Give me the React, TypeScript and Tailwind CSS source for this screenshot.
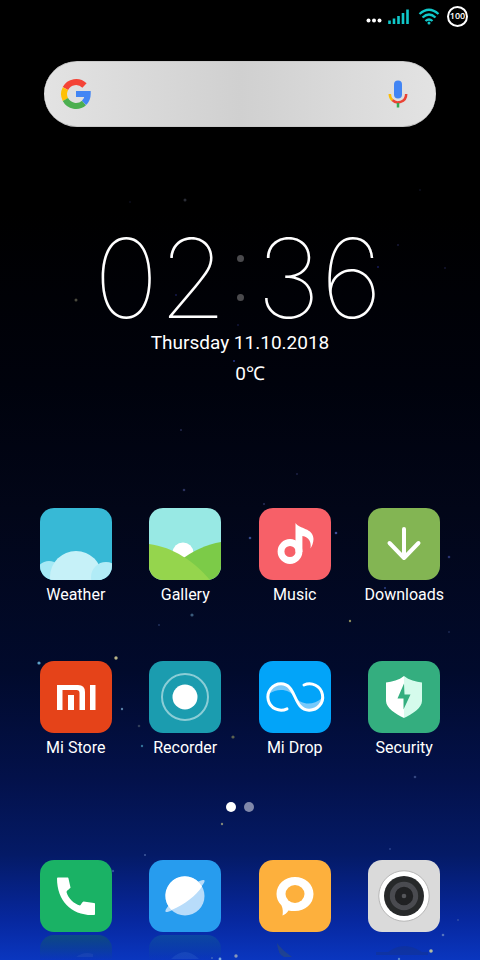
import type { ReactNode } from 'react'

type App = { name: string; icon: ReactNode; tile: string }

const stars = [
  [185, 200, 1.5, '#2a2c35'], [130, 202, 1, '#0d0e1c'], [76, 300, 1.5, '#4a4a3e'], [398, 245, 1, '#171938'],
  [445, 268, 1, '#141631'], [378, 267, 1, '#171b5a'], [176, 295, 1, '#151a4c'], [238, 325, 1, '#12163a'],
  [234, 361, 1, '#24388c'], [420, 190, 1, '#0d0f1e'], [181, 430, 1, '#23284c'], [297, 474, 1, '#1c2144'],
  [184, 490, 1.3, '#2b315c'], [264, 504, 1, '#272f5b'], [250, 538, 1.3, '#354887'], [336, 533, 1.3, '#3e4d95'],
  [449, 557, 1.3, '#29336f'], [385, 588, 1, '#2d4188'], [192, 615, 1.6, '#3a5a7a'], [159, 625, 1, '#22315c'],
  [350, 621, 1.2, '#8b8a5c'], [449, 632, 1, '#1b2752'], [39, 663, 1.6, '#5da1c8'], [116, 658, 1.7, '#b9b588'],
  [122, 709, 1.2, '#587fa6'], [139, 726, 1.3, '#303d5a'], [142, 746, 1.2, '#347198'], [233, 737, 1.6, '#5c624f'],
  [415, 777, 1.3, '#344680'], [222, 824, 1.2, '#808777'], [145, 855, 1, '#405b9c'], [113, 871, 1.2, '#304e9b'],
  [390, 849, 1, '#28418b'], [458, 920, 1, '#304da7'], [443, 935, 1.3, '#5574bd'], [431, 951, 1.8, '#b5bd9f'],
  [236, 956, 1.7, '#8797bb'], [220, 959, 1.4, '#85b1e1'], [212, 958, 1, '#4067bd'], [399, 959, 1.2, '#5784cf'],
] as const

function Weather() {
  return (
    <svg viewBox="0 0 72 72" className="size-full">
      <circle cx="9" cy="66" r="13" fill="#a5e9f5" />
      <circle cx="36" cy="69" r="26" fill="#c6f1f8" />
      <circle cx="66" cy="69" r="15" fill="#b1ecf7" />
    </svg>
  )
}

function Gallery() {
  return (
    <svg viewBox="0 0 72 72" className="size-full">
      <circle cx="34" cy="45" r="10.5" fill="#fff" />
      <path d="M72 34C58 36 44 43 30 53V72H72Z" fill="#7ccb48" />
      <path d="M0 36C24 39 46 54 61 72H0Z" fill="#95d54d" />
    </svg>
  )
}

function Music() {
  return (
    <svg viewBox="0 0 72 72" className="size-full">
      <circle cx="31" cy="43.5" r="9" fill="none" stroke="#fff" strokeWidth="6.8" />
      <path d="M36.5 15C40 21 54.5 20 54.5 31C54.5 34.5 53 38 51.5 40.5C52.5 34 50 29 43.4 28V44H36.5Z" fill="#fff" />
    </svg>
  )
}

function Downloads() {
  return (
    <svg viewBox="0 0 72 72" className="size-full" fill="none" stroke="#fff" strokeWidth="4" strokeLinecap="round" strokeLinejoin="round">
      <path d="M36 21V50M21.5 35L36 50L50.5 35" />
    </svg>
  )
}

function MiStore() {
  return (
    <svg viewBox="0 0 72 72" className="size-full" fill="#fff">
      <path d="M17 24H38Q45 24 45 31V49H39.5V32Q39.5 29 36.5 29H22.5V49H17Z" />
      <path d="M28 34H34V49H28ZM50 24H55.5V49H50Z" />
    </svg>
  )
}

function Recorder() {
  return (
    <svg viewBox="0 0 72 72" className="size-full">
      <circle cx="36" cy="36" r="12.5" fill="#fff" />
      <circle cx="36" cy="36" r="23" fill="none" stroke="#8bcdd6" strokeWidth="2" />
    </svg>
  )
}

function MiDrop() {
  return (
    <svg viewBox="0 0 72 72" className="size-full" fill="none">
      <path d="M10 33C12 25 18 23 23 23C31 24 34 30 37 37C30 27 18 27 10 33Z" fill="#78c9fa" />
      <path d="M36 36C42 44 54 45 63 37C61 45 56 49 50 49C43 49 39 43 36 36Z" fill="#78c9fa" />
      <path
        d="M28 47.8A13.2 13.2 0 1 1 22 22.8C38 22.8 34 49.2 50 49.2A13.2 13.2 0 1 0 45 24"
        stroke="#fff"
        strokeWidth="3"
        strokeLinecap="round"
      />
    </svg>
  )
}

function Security() {
  return (
    <svg viewBox="0 0 72 72" className="size-full">
      <path d="M36 15C31 19 24 21 18 21.5V40C18 47 28 53 36 57Z" fill="#fff" />
      <path d="M36 15C41 19 48 21 54 21.5V40C54 47 44 53 36 57Z" fill="#d5fbec" />
      <path d="M36 22.5L29.5 37.5H35.5V48.5L42.5 33.5H36.5Z" fill="#34ae7f" />
    </svg>
  )
}

function Phone() {
  return (
    <svg viewBox="0 0 72 72" className="size-full">
      <path
        d="M18 17.5H27.5C28 17.5 28.5 18 28.5 18.5L30.5 27.5C30.5 28.5 27 30 26.5 32C28 38 34 44 40 45.5C41 45 42 42 43.5 41.5L54 43C54.7 43 55 43.5 55 44V54C55 54.7 54.5 55 54 55C32 56 17 41 17 18.5C17 18 17.500 17.5 18 17.5Z"
        fill="#fff"
      />
    </svg>
  )
}

function Browser() {
  return (
    <svg viewBox="0 0 72 72" className="size-full">
      <ellipse cx="36" cy="36" rx="25" ry="4.5" transform="rotate(-39 36 36)" fill="#b8dcfa" />
      <circle cx="36" cy="36" r="19.5" fill="#b8dcfa" />
      <path d="M22.5 50A19.5 19.5 0 1 1 53 26.5C47 36 36 44 22.5 50Z" fill="#fff" />
    </svg>
  )
}

function Messages() {
  return (
    <svg viewBox="0 0 72 72" className="size-full">
      <path d="M36 17C46 17 54.5 24 54.5 34C54.5 44 46 51 36 51C33.5 51 31 51 29.5 50.5C28 53 25.5 55 23.5 55.5C24 52 24 49 22.5 45.5C19 42 17.5 38 17.5 34C17.5 24 26 17 36 17Z" fill="#fff" />
      <ellipse cx="36" cy="34" rx="9.5" ry="9" fill="#fdb03d" />
    </svg>
  )
}

function Camera() {
  return (
    <svg viewBox="0 0 72 72" className="size-full">
      <circle cx="36" cy="36" r="25.2" fill="#fff" stroke="#aaa" strokeWidth="0.8" />
      <circle cx="36" cy="36" r="20" fill="#27292a" />
      <circle cx="36" cy="36" r="11.7" fill="#202123" stroke="#4a4b50" strokeWidth="5" />
      <circle cx="36" cy="36" r="2.3" fill="#55565a" />
    </svg>
  )
}

const apps: App[] = [
  { name: 'Weather', icon: <Weather />, tile: 'bg-[#37b9d6]' },
  { name: 'Gallery', icon: <Gallery />, tile: 'bg-[#98e9e4]' },
  { name: 'Music', icon: <Music />, tile: 'bg-[#f76068]' },
  { name: 'Downloads', icon: <Downloads />, tile: 'bg-[#83b553]' },
  { name: 'Mi Store', icon: <MiStore />, tile: 'bg-[#e54319]' },
  { name: 'Recorder', icon: <Recorder />, tile: 'bg-[#1b9caf]' },
  { name: 'Mi Drop', icon: <MiDrop />, tile: 'bg-[#02a4f9]' },
  { name: 'Security', icon: <Security />, tile: 'bg-[#34ae7f]' },
]

const dock = [
  { name: 'Phone', icon: <Phone />, tile: 'bg-[#1ab265]', reflection: 'bg-linear-to-b from-[#0d4a84] to-transparent' },
  { name: 'Browser', icon: <Browser />, tile: 'bg-[#279cee]', reflection: 'bg-linear-to-b from-[#0c47a2] to-transparent' },
  { name: 'Messages', icon: <Messages />, tile: 'bg-[#fdb03d]', reflection: '' },
  { name: 'Camera', icon: <Camera />, tile: 'bg-[#dadada]', reflection: '' },
]

// faint glints that show in the dock's floor under each icon
const glints: Record<string, ReactNode> = {
  Phone: <path d="M36 22Q44 16 53 19V22Z" fill="#3a5fc0" opacity="0.25" />,
  Browser: <path d="M22 24Q36 10 50 24Z" fill="#3a6fd0" opacity="0.25" />,
  Messages: <path d="M18 8Q22 14 33 22H25Q19 20 18 8Z" fill="#34506c" opacity="0.5" />,
  Camera: <path d="M8 17H20Q36 5 54 17H60V20H8Z" fill="#1a337c" opacity="0.35" />,
}

function StatusBar() {
  return (
    <header className="flex h-8 items-center justify-end gap-0.5 pr-3">
      <svg viewBox="0 0 82 24" className="h-6 w-[82px]">
        <g fill="#fff">
          <circle cx="5.500" cy="16.5" r="2" />
          <circle cx="11" cy="16.5" r="2" />
          <circle cx="16.5" cy="16.5" r="2" />
        </g>
        <path d="M26.5 20V16.5M31 20V14.5M35.5 20V12M40 20V9M44.5 20V5.5" stroke="#10c8ca" strokeWidth="2.6" />
        <g fill="none" stroke="#10c8ca" strokeWidth="2.3">
          <path d="M56.5 10Q66 1.500 75.5 10M59.5 13.5Q66 7.5 72.5 13.5M62.5 17Q66 14 69.5 17" />
        </g>
        <circle cx="66" cy="19" r="1.5" fill="#10c8ca" />
      </svg>
      <span className="flex size-[21px] items-center justify-center rounded-full border-2 border-white font-['Open_Sans',sans-serif] text-[9px] font-semibold">
        100
      </span>
    </header>
  )
}

function SearchBar() {
  return (
    <div className="mx-11 mt-[29px] flex h-[66px] items-center justify-between rounded-full border-y border-[#c9c9c9] bg-linear-to-r from-[#e3e3e3] via-[#d0d0d0] to-[#e3e3e3] px-4">
      <button aria-label="Google" className="size-8">
        <svg viewBox="0 0 32 32" className="size-full" fill="none" strokeWidth="6">
          <path d="M5.4 10.5A12 12 0 0 1 24.5 7.5" stroke="#f44336" />
          <path d="M5.4 21.5A12 12 0 0 1 5.4 10.5" stroke="#ffc107" />
          <path d="M24 24.9A12 12 0 0 1 5.4 21.5" stroke="#4caf50" />
          <path d="M16 16H27.7C27.7 19.5 26.5 22.5 24 24.9" stroke="#4285f4" />
        </svg>
      </button>
      <input aria-label="Search" className="min-w-0 flex-1 outline-none" />
      <button aria-label="Voice search" className="mr-1.5 size-8">
        <svg viewBox="0 0 32 32" className="size-full" fill="none" strokeWidth="2.5">
          <rect x="12" y="2.5" width="8" height="18" rx="4" fill="#4285f4" />
          <path d="M7.8 16C7.8 19 9 21 10.5 22.2" stroke="#fbbc05" />
          <path d="M10.5 22.2C14 26 24.2 25 24.2 16" stroke="#ea4335" />
          <path d="M16 25V29.5" stroke="#34a853" />
        </svg>
      </button>
    </div>
  )
}

function Clock() {
  return (
    <section className="flex flex-col items-center pt-24">
      <div className="flex h-[110px] items-center text-center font-[Inter,sans-serif] text-[110px] leading-none font-thin">
        <span className="w-[136px]">02</span>
        <span className="mx-2 flex flex-col gap-8">
          <i className="size-[7px] rounded-full bg-[#4a4a4d]" />
          <i className="size-[7px] rounded-full bg-[#4a4a4d]" />
        </span>
        <span className="w-[136px]">36</span>
      </div>
      <p className="-mt-0.5 text-[19px] leading-6">Thursday 11.10.2018</p>
      <p className="mt-[7px] pl-5 text-[19px] leading-6">0℃</p>
    </section>
  )
}

export default function App() {
  return (
    <main className="relative flex min-h-screen flex-col overflow-hidden bg-black bg-linear-[180deg,#000_0%,#000_22%,#00020c_40%,#020618_53%,#010a2c_70%,#03114a_81%,#041a66_89%,#0728a0_96%,#0a36bf_100%] font-[Roboto,sans-serif] text-white">
      <svg viewBox="0 0 480 960" preserveAspectRatio="none" className="absolute inset-0 size-full">
        {stars.map(([x, y, r, fill]) => (
          <circle key={`${x}-${y}`} cx={x} cy={y} r={r} fill={fill} />
        ))}
      </svg>
      <div className="relative flex flex-1 flex-col">
        <StatusBar />
        <SearchBar />
        <Clock />
        <div className="mt-auto grid grid-cols-4 gap-y-[55px] px-[21px]">
          {apps.map(({ name, icon, tile }) => (
            <button key={name} className="flex flex-col items-center gap-1">
              <span className={`size-[72px] overflow-hidden rounded-[14px] ${tile}`}>{icon}</span>
              <span className="text-base leading-[22px]">{name}</span>
            </button>
          ))}
        </div>
        <nav className="mt-[43px] flex justify-center gap-2">
          <button aria-label="Page 1" className="size-[10px] rounded-full bg-white" />
          <button aria-label="Page 2" className="size-[10px] rounded-full bg-[#8088aa]" />
        </nav>
        <footer className="mt-12 grid grid-cols-4 px-[21px]">
          {dock.map(({ name, icon, tile, reflection }) => (
            <div key={name} className="flex flex-col items-center gap-[3px]">
              <button aria-label={name} className={`size-[72px] overflow-hidden rounded-[14px] ${tile}`}>
                {icon}
              </button>
              <div className={`h-[25px] w-[72px] rounded-t-[14px] ${reflection}`}>
                <svg viewBox="0 0 72 25" className="size-full">
                  {glints[name]}
                </svg>
              </div>
            </div>
          ))}
        </footer>
      </div>
    </main>
  )
}
